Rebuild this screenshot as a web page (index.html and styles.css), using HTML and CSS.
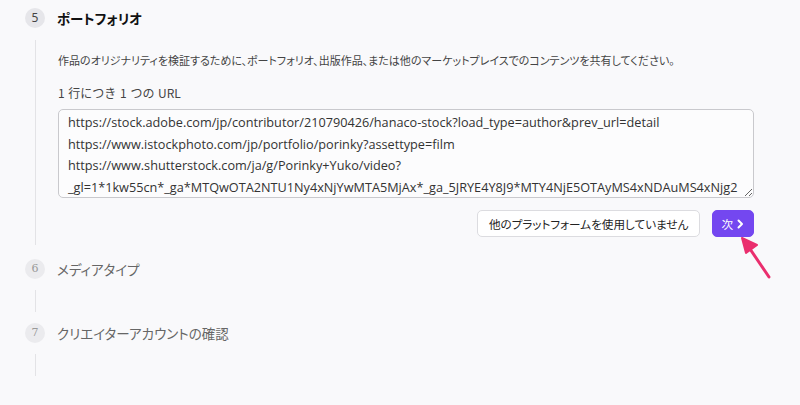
FILE: index.html
```
<!DOCTYPE html>
<html lang="ja">
<head>
<meta charset="utf-8">
<link rel="stylesheet" href="styles.css">
</head>
<body>
<div class="steps">
  <section class="step active">
    <div class="num">5</div>
    <h2 class="title">ポートフォリオ</h2>
    <div class="rail"></div>
    <div class="body">
      <p class="desc">作品のオリジナリティを検証するために、ポートフォリオ、出版作品、または他のマーケットプレイスでのコンテンツを共有してください。</p>
      <p class="label">1 行につき 1 つの URL</p>
      <textarea class="urls" spellcheck="false" wrap="off">https://stock.adobe.com/jp/contributor/210790426/hanaco-stock?load_type=author&amp;prev_url=detail
https://www.istockphoto.com/jp/portfolio/porinky?assettype=film
https://www.shutterstock.com/ja/g/Porinky+Yuko/video?
_gl=1*1kw55cn*_ga*MTQwOTA2NTU1Ny4xNjYwMTA5MjAx*_ga_5JRYE4Y8J9*MTY4NjE5OTAyMS4xNDAuMS4xNjg2</textarea>
      <div class="actions">
        <button class="btn ghost">他のプラットフォームを使用していません</button>
        <button class="btn primary">次<svg width="9" height="10" viewBox="0 0 9 10"><path d="M2.5 1.5 6 5 2.5 8.5" fill="none" stroke="#fff" stroke-width="2" stroke-linecap="round" stroke-linejoin="round"/></svg></button>
      </div>
    </div>
  </section>
  <section class="step">
    <div class="num">6</div>
    <h2 class="title">メディアタイプ</h2>
    <div class="rail"></div>
    <div class="body short"></div>
  </section>
  <section class="step">
    <div class="num">7</div>
    <h2 class="title">クリエイターアカウントの確認</h2>
    <div class="rail"></div>
    <div class="body short"></div>
  </section>
</div>
<svg class="pointer" width="50" height="60" viewBox="0 0 50 60">
  <path d="M31 41 L10 10" stroke="#ea2f6e" stroke-width="3" stroke-linecap="round"/>
  <path d="M4 2 L19 9 L8 17 Z" fill="#ea2f6e" stroke="#ea2f6e" stroke-width="2" stroke-linejoin="round"/>
</svg>
</body>
</html>
```
FILE: styles.css
```
html, body {
  margin: 0;
  padding: 0;
  background: #f9f9fb;
}
body {
  font-family: "Noto Sans CJK JP", "Noto Sans", sans-serif;
  color: #222;
  position: relative;
  width: 800px;
  height: 405px;
  overflow: hidden;
}
.steps {
  padding: 8px 46px 0 25px;
}
.step {
  display: grid;
  grid-template-columns: 20px 1fr;
  column-gap: 12px;
  row-gap: 11px;
  margin-bottom: 11px;
}
.step.active {
  row-gap: 12px;
  margin-bottom: 14px;
}
.num {
  width: 20px;
  height: 20px;
  border-radius: 50%;
  background: #ebebee;
  color: #999;
  font-family: "DejaVu Serif", serif;
  font-size: 11px;
  line-height: 20px;
  text-align: center;
}
.active .num {
  background: #e6e6ea;
  color: #444;
  font-family: "Noto Sans", sans-serif;
  font-size: 12px;
}
.title {
  margin: 0;
  font-size: 13.5px;
  font-weight: 400;
  line-height: 20px;
  color: #666;
  font-feature-settings: "palt";
}
.active .title {
  font-weight: 700;
  color: #111;
}
.rail {
  justify-self: center;
  width: 1px;
  background: #e3e3e6;
}
.body {
  padding: 11px 0 8px 1px;
}
.body.short {
  height: 22px;
  padding: 0;
}
.desc {
  margin: 0;
  font-size: 11px;
  line-height: 18px;
  color: #444;
  font-feature-settings: "palt";
}
.label {
  margin: 15px 0 7px;
  font-size: 12px;
  line-height: 18px;
  color: #444;
  word-spacing: 1px;
}
.urls {
  display: block;
  box-sizing: border-box;
  width: 100%;
  height: 89px;
  margin: 0;
  padding: 2px 9px;
  border: 1px solid #c9c9cd;
  border-radius: 5px;
  background: #fcfcfd;
  font-family: "Open Sans", sans-serif;
  font-size: 12.7px;
  line-height: 21.7px;
  color: #333;
  resize: vertical;
  overflow: hidden;
}
.actions {
  display: flex;
  justify-content: flex-end;
  gap: 12px;
  margin-top: 12px;
}
.btn {
  height: 27px;
  border-radius: 5px;
  font-family: "Noto Sans CJK JP", sans-serif;
  font-size: 11.6px;
  display: inline-flex;
  align-items: center;
  gap: 3px;
  font-feature-settings: "palt";
}
.ghost {
  padding: 0 11px;
  background: #fff;
  border: 1px solid #dcdce0;
  color: #222;
}
.primary {
  padding: 0 8px;
  background: #7447f0;
  border: 1px solid #7447f0;
  color: #fff;
}
.pointer {
  position: absolute;
  left: 738px;
  top: 236px;
}
```
